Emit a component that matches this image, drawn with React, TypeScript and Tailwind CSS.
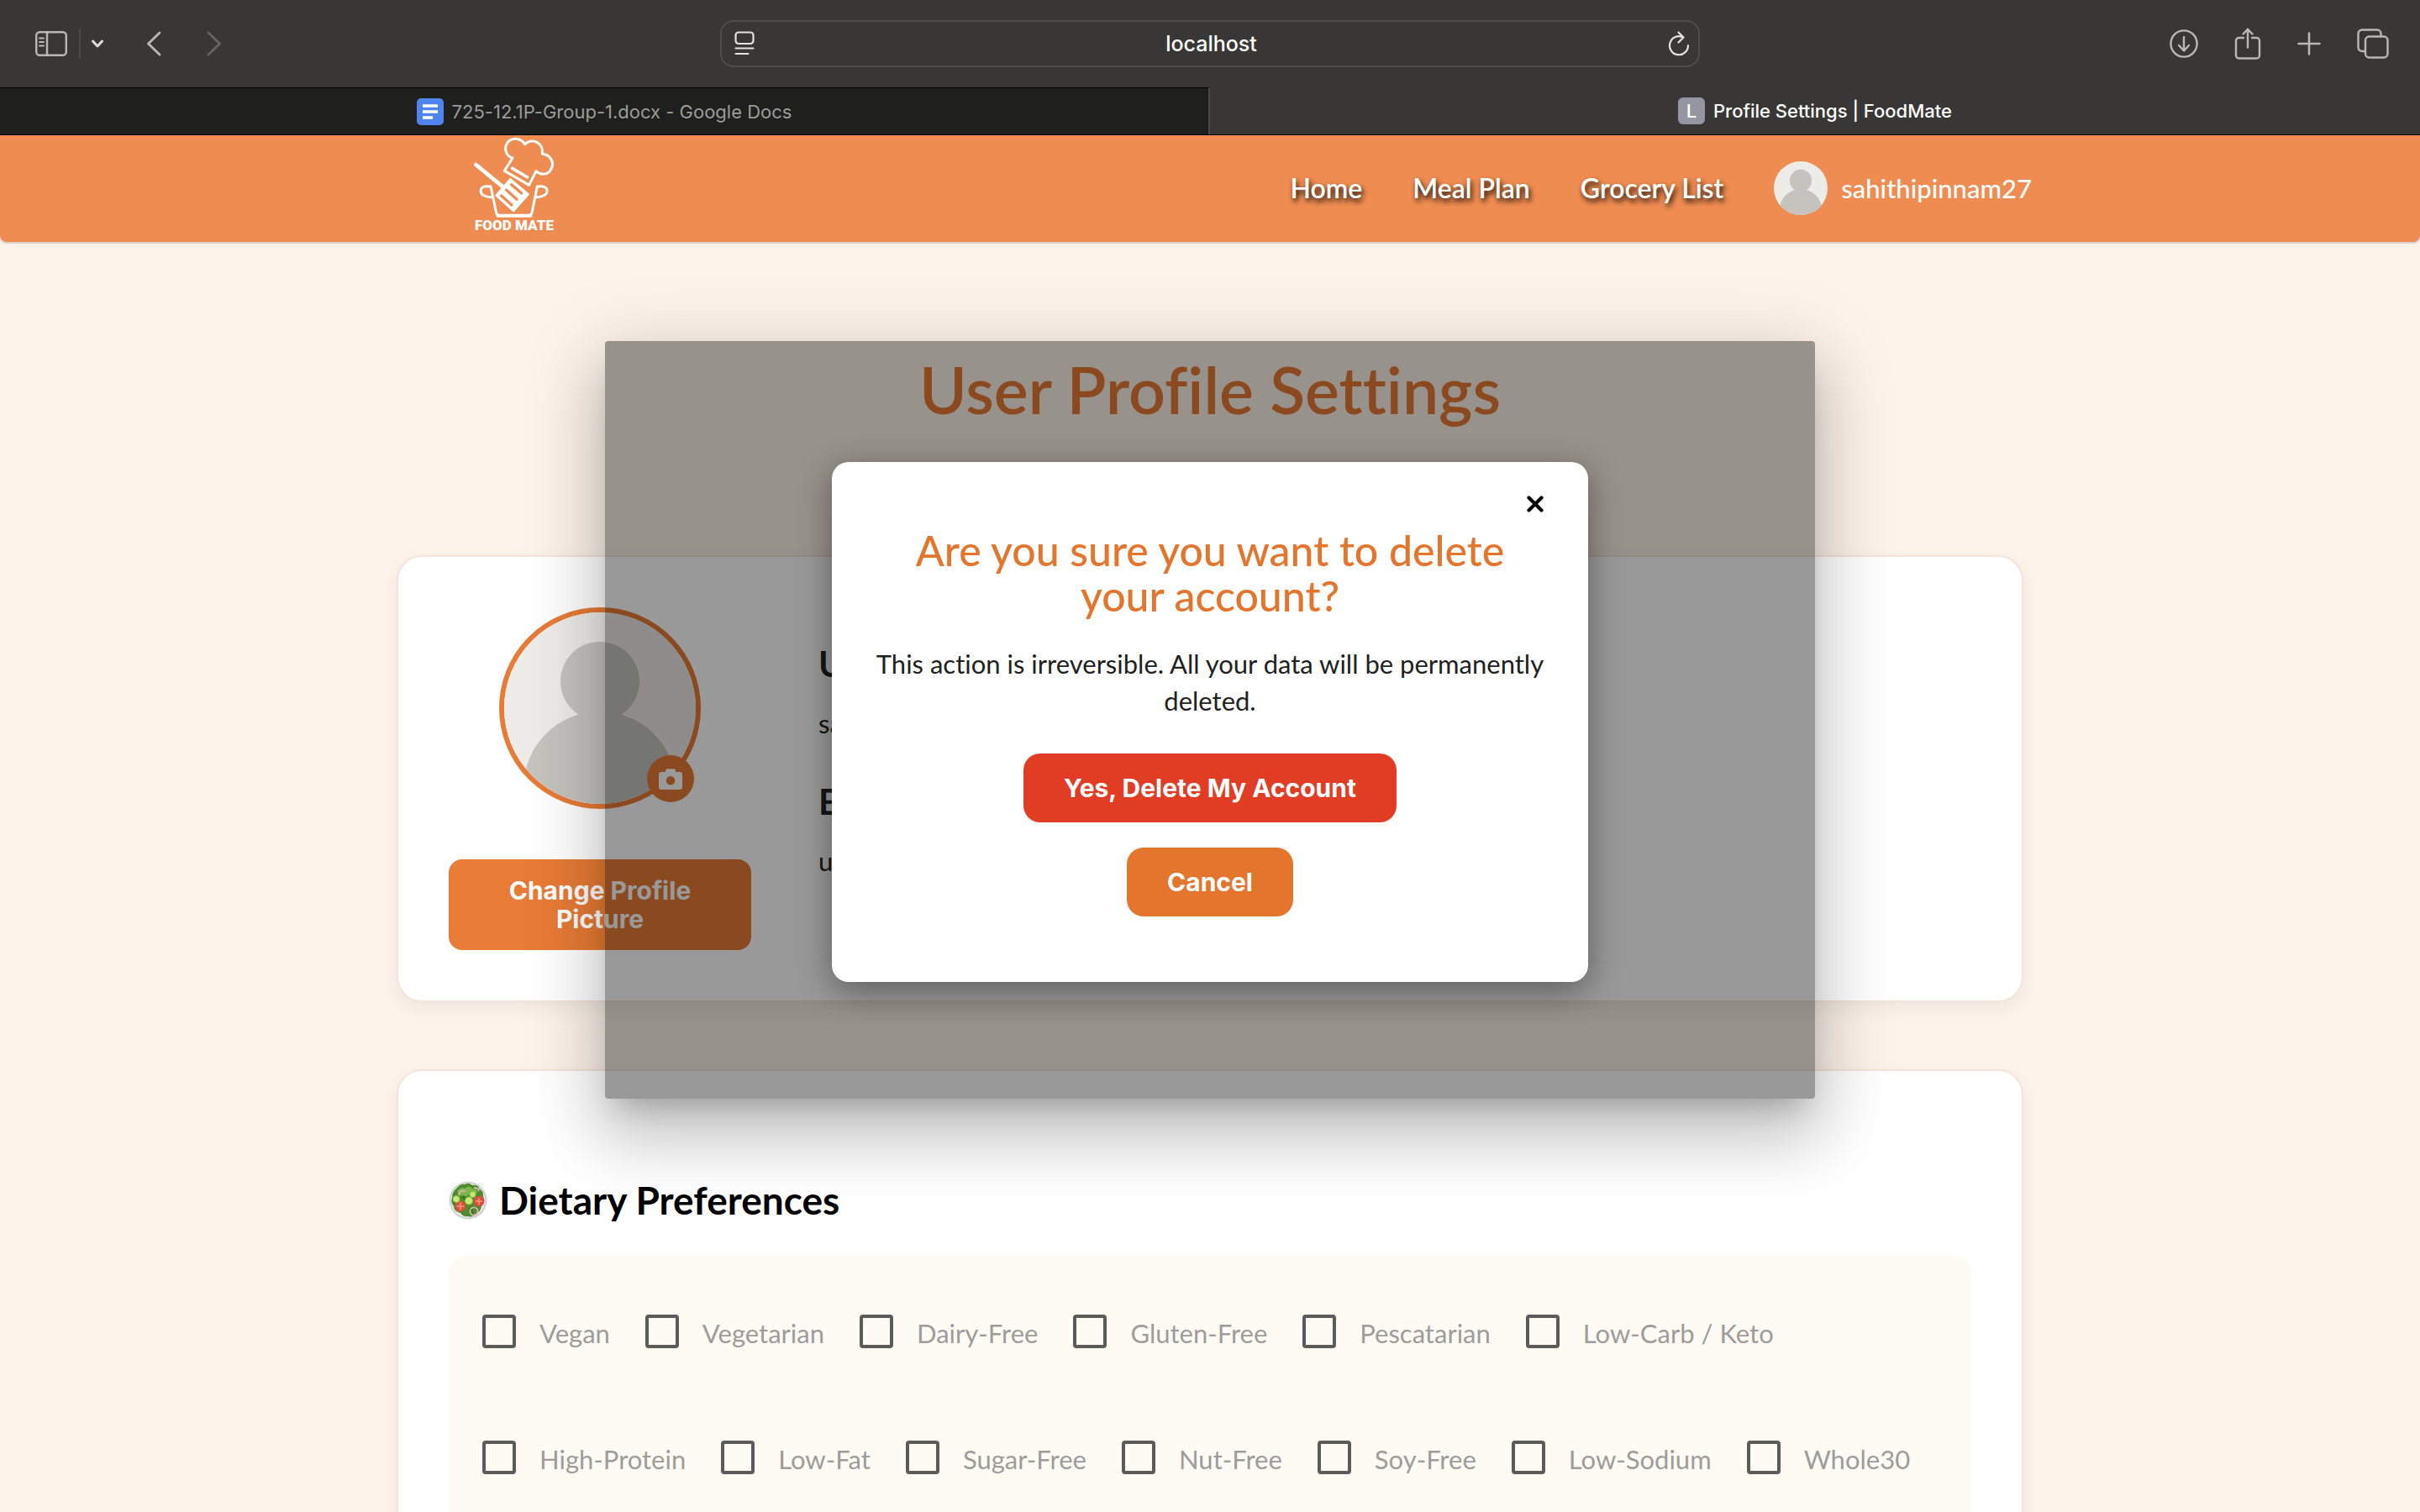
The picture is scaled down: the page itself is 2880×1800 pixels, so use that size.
import React from 'react';

const firstPreferences = ['Vegan', 'Vegetarian', 'Dairy-Free', 'Gluten-Free', 'Pescatarian', 'Low-Carb / Keto'];
const morePreferences = ['High-Protein', 'Low-Fat', 'Sugar-Free', 'Nut-Free', 'Soy-Free', 'Low-Sodium', 'Whole30'];
const preferences = [...firstPreferences, ...morePreferences];

function Toolbar() {
  return (
    <div className="grid h-[104px] grid-cols-[1fr_1166px_1fr] items-center bg-[#383735] text-[#b9b8b6]">
      <div className="flex items-center pl-[42px]">
        <button type="button" aria-label="Show sidebar">
          <svg width="38" height="30" viewBox="0 0 38 30" fill="none" stroke="currentColor" strokeWidth="2.4">
            <rect x="1.2" y="1.2" width="35.6" height="27.6" rx="4" />
            <path d="M14 1.5v27" />
            <path d="M5 8.5h5M5 13h5M5 17.5h5" strokeWidth="2" strokeLinecap="round" />
          </svg>
        </button>
        <span className="ml-3.5 h-9 w-0.5 bg-[#4b4a48]" />
        <button type="button" aria-label="Tab groups" className="ml-3 text-[#dddcda]">
          <svg width="16" height="10" viewBox="0 0 16 10" fill="none" stroke="currentColor" strokeWidth="3" strokeLinecap="round" strokeLinejoin="round">
            <path d="M2.5 2 8 8l5.500-6" />
          </svg>
        </button>
        <button type="button" aria-label="Back" className="ml-[50px]">
          <svg width="18" height="30" viewBox="0 0 18 30" fill="none" stroke="currentColor" strokeWidth="2.8" strokeLinecap="round" strokeLinejoin="round">
            <path d="M16 2 2.500 15 16 28" />
          </svg>
        </button>
        <button type="button" aria-label="Forward" className="ml-[54px] text-[#656462]">
          <svg width="18" height="30" viewBox="0 0 18 30" fill="none" stroke="currentColor" strokeWidth="2.8" strokeLinecap="round" strokeLinejoin="round">
            <path d="M2 2l13.500 13L2 28" />
          </svg>
        </button>
      </div>
      <div className="flex h-14 items-center rounded-2xl border-2 border-[#4e4d4b] pr-2.5 pl-[15px] text-[#e4e3e1]">
        <button type="button" aria-label="Page menu">
          <svg width="24" height="30" viewBox="0 0 24 30" fill="none" stroke="currentColor" strokeWidth="2.2" strokeLinecap="round">
            <rect x="1.500" y="1.500" width="21" height="13.500" rx="3.500" />
            <path d="M1.500 20.500h21M1.500 27h15" />
          </svg>
        </button>
        <input
          aria-label="Address"
          readOnly
          value="localhost"
          className="min-w-0 flex-1 bg-transparent text-center font-['Inter',sans-serif] text-[25px] leading-8 font-medium text-white outline-none"
        />
        <button type="button" aria-label="Reload">
          <svg width="26" height="30" viewBox="0 0 26 30" fill="none" stroke="currentColor" strokeWidth="2.2" strokeLinecap="round" strokeLinejoin="round">
            <path d="M17.500 7.200A11 11 0 1 0 24 17" />
            <path d="M12.500 1.500l6 6-6 6" />
          </svg>
        </button>
      </div>
      <div className="flex items-center justify-end gap-[43px] pr-[37px]">
        <button type="button" aria-label="Downloads">
          <svg width="34" height="34" viewBox="0 0 34 34" fill="none" stroke="currentColor" strokeWidth="2.400" strokeLinecap="round" strokeLinejoin="round">
            <circle cx="17" cy="17" r="15.600" />
            <path d="M17 9v16M11 19l6 6.500 6-6.500" />
          </svg>
        </button>
        <button type="button" aria-label="Share">
          <svg width="32" height="38" viewBox="0 0 32 38" fill="none" stroke="currentColor" strokeWidth="2.400" strokeLinecap="round" strokeLinejoin="round">
            <path d="M11 12H5.500A3.500 3.500 0 0 0 2 15.500V33a3.500 3.500 0 0 0 3.500 3.500h21A3.500 3.500 0 0 0 30 33V15.500a3.500 3.500 0 0 0-3.500-3.500H21" />
            <path d="M16 23.500V1.800M10.500 7.500 16 1.800l5.500 5.700" />
          </svg>
        </button>
        <button type="button" aria-label="New tab">
          <svg width="28" height="28" viewBox="0 0 28 28" fill="none" stroke="currentColor" strokeWidth="2.600" strokeLinecap="round">
            <path d="M14 1.500v25M1.500 14h25" />
          </svg>
        </button>
        <button type="button" aria-label="Show all tabs">
          <svg width="38" height="36" viewBox="0 0 38 36" fill="none" stroke="currentColor" strokeWidth="2.400" strokeLinejoin="round">
            <rect x="10" y="9.500" width="26.500" height="25" rx="4.500" />
            <path d="M10 27H6a4.500 4.500 0 0 1-4.500-4.500V6A4.500 4.500 0 0 1 6 1.500h18A4.500 4.500 0 0 1 28.500 6v3.500" />
          </svg>
        </button>
      </div>
    </div>
  );
}

function BrowserTabs() {
  return (
    <div role="tablist" className="grid h-[57px] grid-cols-2 border-b border-black font-['Inter',sans-serif] text-[22px] leading-8">
      <button type="button" role="tab" aria-selected="false" className="flex items-center justify-center gap-2.5 border-t border-r-2 border-t-black border-r-[#4a4a48] bg-[#1f1f1d] text-[#9c9c9a]">
        <svg width="32" height="32" viewBox="0 0 32 32">
          <rect width="32" height="32" rx="5" fill="#4f83ee" />
          <path d="M7 9h18M7 16h18M7 23h12" stroke="#fff" strokeWidth="3.600" />
        </svg>
        <span>725-12.1P-Group-1.docx - Google Docs</span>
      </button>
      <button type="button" role="tab" aria-selected="true" className="flex items-center justify-center gap-2.5 bg-[#383735] font-medium text-white">
        <span className="flex size-8 items-center justify-center rounded-md bg-[#9696a3]">L</span>
        <span>Profile Settings | FoodMate</span>
      </button>
    </div>
  );
}

function Logo() {
  return (
    <a href="#home" aria-label="Food Mate" className="flex w-24 flex-col items-center pb-2.5 text-white">
      <svg width="98" height="96" viewBox="72 36 294 288" fill="none" stroke="currentColor" strokeWidth="9" strokeLinejoin="round" strokeLinecap="round">
        <path d="M213 111C190 106 182 78 193 59 207 37 241 37 257 62 285 35 325 60 319 97 350 99 364 130 350 152 340 172 313 174 297 158L272 208 184 157Z" />
        <path d="M212 148l54 32" strokeWidth="11" />
        <path d="M82 135l100 82" strokeWidth="14" />
        <path d="M205 188l63 53-52 58-60-54Z" fill="currentColor" />
        <path d="M209 206l36 31M191 226l37 33M173 246l37 33" stroke="#ef8c51" strokeWidth="10" />
        <path d="M126 213h9l20 94q2 9 11 9h104q10 0 12-9l19-94h8" />
        <path d="M160 318h118" strokeWidth="11" />
        <path d="M128 213C90 206 86 252 138 251M307 213C346 206 350 252 296 251" />
      </svg>
      <span className="font-['Roboto',sans-serif] text-[17px] leading-[18px] font-black whitespace-nowrap">FOOD MATE</span>
    </a>
  );
}

function Silhouette({ className }: { className: string }) {
  return (
    <svg viewBox="0 0 228 228" className={className} aria-hidden="true">
      <rect width="228" height="228" fill="#edece8" />
      <circle cx="114" cy="82" r="47" fill="#c4c3be" />
      <circle cx="114" cy="209" r="91" fill="#c4c3be" />
    </svg>
  );
}

function SiteHeader() {
  const link = '[text-shadow:2px_4px_6px_rgba(0,0,0,0.95)]';
  return (
    <header className="flex h-[127px] items-center justify-between rounded-b-lg bg-[#ef8c51] pr-[462px] pl-[564px] font-['Lato',sans-serif] text-white shadow-[0_2px_2px_rgba(0,0,0,0.16)]">
      <Logo />
      <nav className="flex items-center gap-[60px] pb-0.5 text-[32px] leading-10 font-semibold">
        <a href="#home" className={link}>Home</a>
        <a href="#meal-plan" className={link}>Meal Plan</a>
        <a href="#grocery-list" className={link}>Grocery List</a>
        <a href="#profile" className="flex items-center gap-4 text-[31px] font-medium">
          <Silhouette className="size-16 rounded-full" />
          sahithipinnam27
        </a>
      </nav>
    </header>
  );
}

function SaladIcon() {
  return (
    <svg width="46" height="46" viewBox="0 0 46 46" aria-hidden="true">
      <circle cx="23" cy="23" r="22.500" fill="#cfd3d4" />
      <circle cx="23" cy="23" r="20.500" fill="#e6e9e8" />
      <path d="M9 9q5-6 10-5 5-3 9 1 7-1 8 4 6 3 5 9 3 7-2 12-1 7-7 9-4 5-9 3-6 1-9-4-8-2-8-8-4-5-2-10 0-7 5-11Z" fill="#4f8a2c" />
      <path d="M10 12q5-6 9-3 5-5 9 0 6 0 6 5-5 4-9 1-3 5-8 2-4 3-7-5Z" fill="#7db548" />
      <path d="M6 26q5-3 8 1 4-2 6 4M28 23q6-4 11-1M24 33q5 1 4 8M17 18q2 4 6 3" fill="none" stroke="#37701e" strokeWidth="2.400" />
      <path d="M12 17q1-7 8-5M30 8q5 0 6 4" fill="none" stroke="#d3b8b0" strokeWidth="2" />
      <circle cx="14" cy="30" r="6.500" fill="#d9503f" />
      <path d="M14 25.500v9M9.500 30h9" stroke="#ee9a78" strokeWidth="1.600" />
      <circle cx="36" cy="24" r="6.500" fill="#d9503f" />
      <path d="M36 20v8M32 24h8" stroke="#ee9a78" strokeWidth="1.600" />
      <circle cx="24" cy="23.500" r="4.500" fill="#c8e878" stroke="#8fc04a" />
      <circle cx="9" cy="21.500" r="4" fill="#c8e878" stroke="#8fc04a" />
      <circle cx="28.500" cy="16" r="3.600" fill="#c8e878" stroke="#8fc04a" />
      <circle cx="30" cy="36" r="4.600" fill="none" stroke="#d3b8b0" strokeWidth="1.800" />
    </svg>
  );
}

function ProfileCard() {
  return (
    <section className="flex gap-20 rounded-[30px] border-2 border-[#f5e4da] bg-white p-[60px] shadow-[0_8px_24px_rgba(0,0,0,0.06)]">
      <div className="flex w-[360px] flex-col items-center gap-[60px]">
        <div className="relative size-60">
          <Silhouette className="size-60 rounded-full border-6 border-[#e87b35]" />
          <button type="button" aria-label="Upload photo" className="absolute right-2 bottom-2 flex size-14 items-center justify-center rounded-full bg-[#e87b35]">
            <svg width="28" height="25" viewBox="0 0 28 25" fill="#fff">
              <path fillRule="evenodd" d="M3 4h5V2.500Q8.300.300 10.500.300h7Q19.700.300 20 2.500V4h5q3 0 3 3v15q0 3-3 3H3q-3 0-3-3V7q0-3 3-3Zm11 5a5.200 5.200 0 1 0 0 10.400A5.200 5.200 0 0 0 14 9Z" />
            </svg>
          </button>
        </div>
        <button type="button" className="w-full rounded-2xl bg-[#e87b35] px-12 py-5 text-center font-['Inter',sans-serif] text-[30px] leading-[34px] font-bold text-white">
          Change Profile Picture
        </button>
      </div>
      <dl className="pt-[38px] font-['Lato',sans-serif] text-[31px] leading-[44px] text-[#262626]">
        <dt className="text-[42px] leading-[58px] font-bold">Username</dt>
        <dd className="mt-5">sahithipinnam27</dd>
        <dt className="mt-[42px] text-[42px] leading-[58px] font-bold">Email</dt>
        <dd className="mt-5">user</dd>
      </dl>
    </section>
  );
}

function DietaryCard() {
  return (
    <section className="rounded-[30px] border-2 border-[#f5e4da] bg-white p-[60px] shadow-[0_8px_24px_rgba(0,0,0,0.06)]">
      <h2 className="mt-16 flex items-center gap-3.5 font-['Lato',sans-serif] text-[46px] leading-[60px] font-bold text-black">
        <SaladIcon />
        Dietary Preferences
      </h2>
      <fieldset className="mt-9 flex flex-wrap gap-x-[42px] gap-y-[106px] rounded-[20px] bg-[#fefbf5] px-10 pt-[70px] pb-[120px] font-['Lato',sans-serif] text-[31px] leading-[44px] text-[#9d9c9a]">
        {preferences.map((name) => (
          <label key={name} className="flex items-start gap-7">
            <input type="checkbox" className="size-10 appearance-none rounded border-4 border-[#5b5b5a] checked:bg-[#e87b35]" />
            {name}
          </label>
        ))}
      </fieldset>
    </section>
  );
}

function DeleteDialog() {
  return (
    <div className="absolute inset-x-0 top-[118px] mx-auto flex w-1/2 justify-center rounded-[4px] bg-black/40 pt-36 pb-[139px] shadow-[0_22px_30px_-14px_rgba(0,0,0,0.2),0_48px_76px_6px_rgba(0,0,0,0.14),0_18px_92px_16px_rgba(0,0,0,0.12)]">
      <div role="dialog" aria-modal="true" aria-labelledby="delete-title" className="flex w-[900px] flex-col items-center rounded-[20px] bg-white px-[50px] pt-10 pb-[78px] text-center font-['Lato',sans-serif] shadow-[0_10px_40px_rgba(0,0,0,0.4)]">
        <button type="button" aria-label="Close" className="mr-[3px] self-end text-black">
          <svg width="20" height="20" viewBox="0 0 20 20" fill="none" stroke="currentColor" strokeWidth="4.200" strokeLinecap="round">
            <path d="M2.500 2.500l15 15M17.500 2.500l-15 15" />
          </svg>
        </button>
        <h3 id="delete-title" className="mt-[18px] text-[50px] leading-[54px] font-medium text-[#e3752d]">
          Are you sure you want to delete your account?
        </h3>
        <p className="mt-8 text-[31px] leading-[44px] text-[#212121]">
          This action is irreversible. All your data will be permanently deleted.
        </p>
        <div className="mt-10 flex flex-col items-center gap-[30px] pt-px font-['Inter',sans-serif] text-[30px] leading-[42px] font-bold text-white">
          <button type="button" className="rounded-[20px] bg-[#e13d25] px-12 py-5">Yes, Delete My Account</button>
          <button type="button" className="rounded-[20px] bg-[#e3752d] px-12 py-5">Cancel</button>
        </div>
      </div>
    </div>
  );
}

export default function App() {
  return (
    <div className="h-screen overflow-hidden bg-[#fdf3ea] [font-variant-ligatures:none]">
      <Toolbar />
      <BrowserTabs />
      <SiteHeader />
      <main className="relative">
        <h1 className="pt-[127px] text-center font-['Lato',sans-serif] text-[77px] leading-[96px] font-semibold text-[#e87b35]">
          User Profile Settings
        </h1>
        <div className="mx-auto mt-[150px] flex max-w-[1936px] flex-col gap-20">
          <ProfileCard />
          <DietaryCard />
        </div>
        <DeleteDialog />
      </main>
    </div>
  );
}
